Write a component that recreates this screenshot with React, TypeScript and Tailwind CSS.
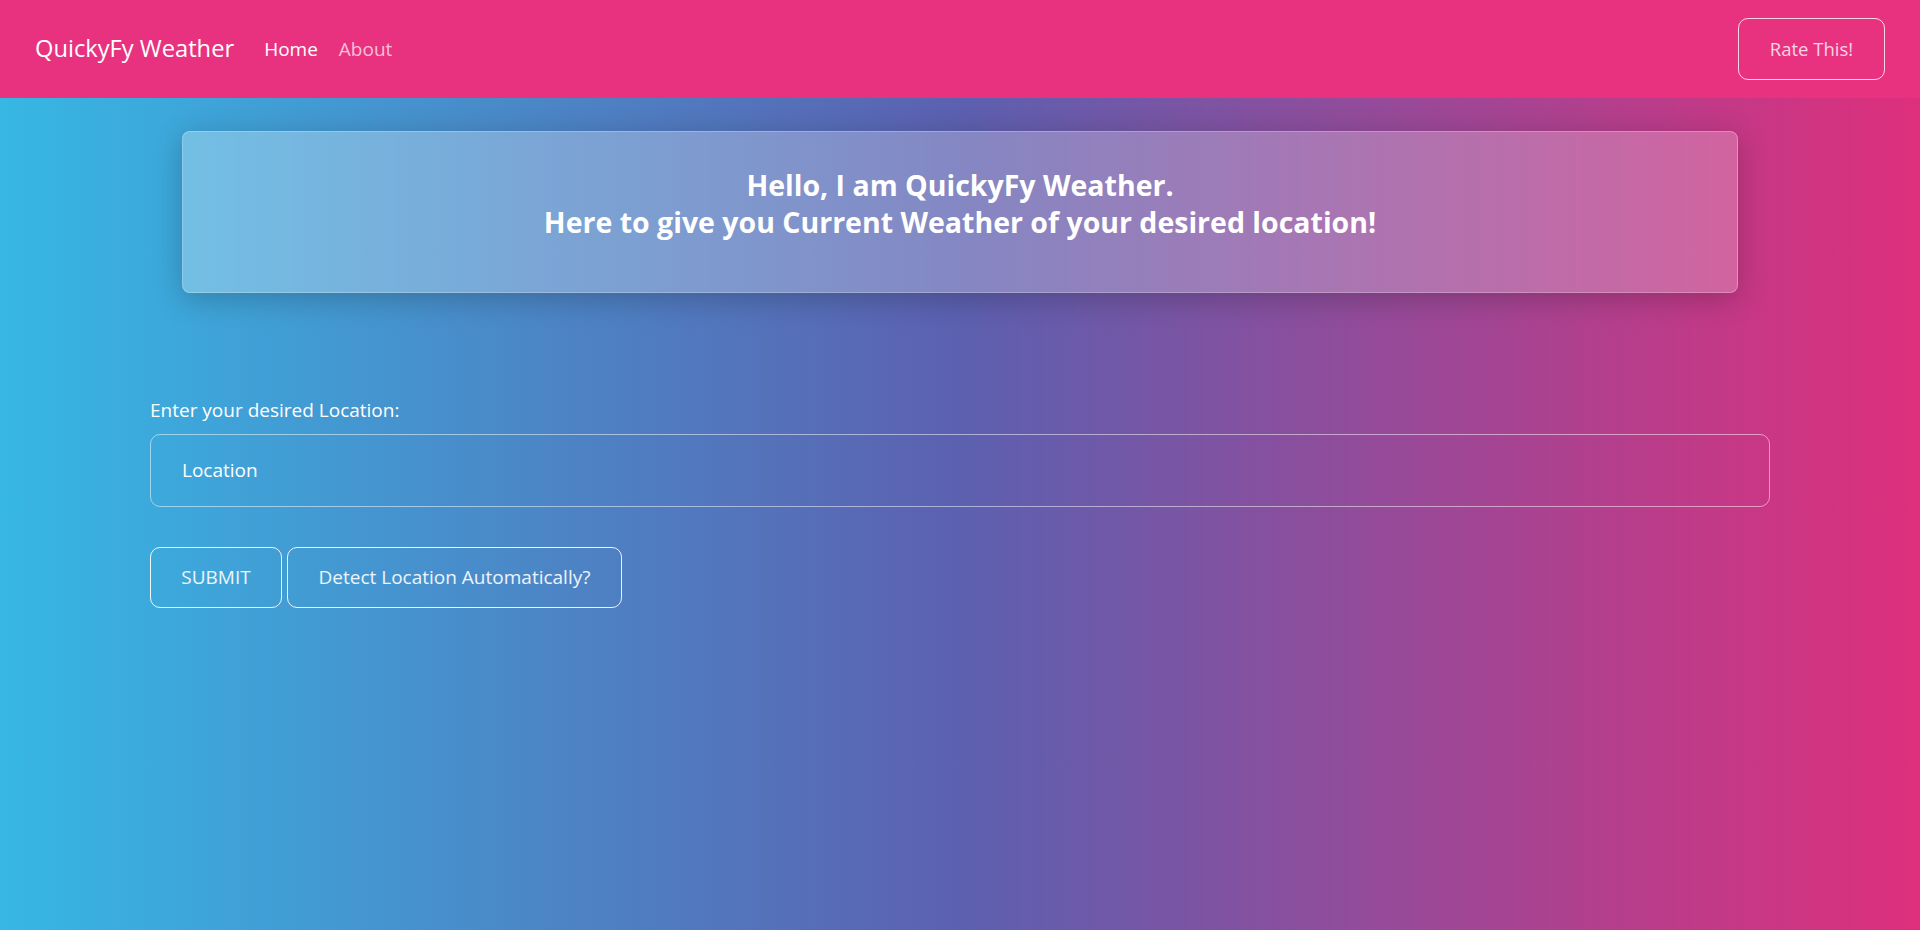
import { useState } from "react";

function Navbar() {
  return (
    <nav className="flex h-[98px] items-center justify-between bg-[#e83280] px-[35px]">
      <div className="flex items-center">
        <a href="#" className="text-[23.7px] text-white">
          QuickyFy Weather
        </a>
        <ul className="ml-[30px] flex items-center gap-[21px] text-[19px]">
          <li>
            <a href="#" className="text-white">
              Home
            </a>
          </li>
          <li>
            <a href="#" className="text-white/70">
              About
            </a>
          </li>
        </ul>
      </div>
      <button className="h-[62px] w-[147px] rounded-[10px] border border-white/80 text-[18.5px] text-[#fbd3e4]">
        Rate This!
      </button>
    </nav>
  );
}

function App() {
  const [location, setLocation] = useState("");

  return (
    <div className="min-h-[930px] bg-[linear-gradient(to_right,#36b7e4,#5c60b0,#de2f7c)] font-['Open_Sans',sans-serif]">
      <Navbar />

      <main className="px-[150px]">
        <div className="mx-[32px] mt-[33px] h-[162px] rounded-[8px] border border-white/25 bg-[linear-gradient(to_right,rgba(255,255,255,0.28),rgba(255,255,255,0.22))] pt-[35px] text-center text-[28.5px] leading-[37px] font-bold text-white shadow-[0_6px_30px_rgba(0,0,0,0.22)]">
          <p>Hello, I am QuickyFy Weather.</p>
          <p>Here to give you Current Weather of your desired location!</p>
        </div>

        <label className="mt-[103px] block text-[19px] text-white">
          Enter your desired Location:
        </label>
        <input
          value={location}
          onChange={(e) => setLocation(e.target.value)}
          placeholder="Location"
          className="mt-[9px] h-[73px] w-full rounded-[10px] border border-white/50 bg-transparent px-[31px] text-[19px] text-white outline-none placeholder:text-white"
        />

        <div className="mt-[40px] flex gap-[5px]">
          <button className="h-[61px] w-[132px] rounded-[10px] border border-white/90 text-[19px] text-white/90">
            SUBMIT
          </button>
          <button className="h-[61px] w-[335px] rounded-[10px] border border-white/90 text-[19px] text-white/90">
            Detect Location Automatically?
          </button>
        </div>
      </main>
    </div>
  );
}

export default App;
